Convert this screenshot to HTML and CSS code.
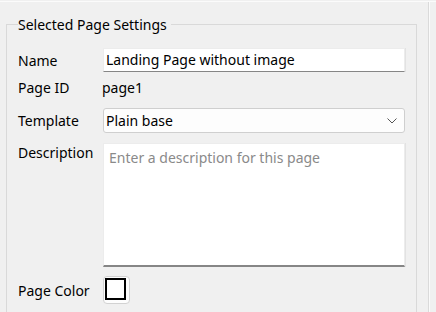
FILE: index.html
```html
<!DOCTYPE html>
<html>
<head>
<meta charset="utf-8">
<link rel="stylesheet" href="styles.css">
</head>
<body>
<div class="topline"></div>
<div class="frame">
  <div class="left">
    <fieldset class="group">
      <legend class="legend">Selected Page Settings</legend>
      <div class="row row-name">
        <label class="label">Name</label>
        <div class="input">Landing Page without image</div>
      </div>
      <div class="row row-id">
        <label class="label">Page ID</label>
        <div class="value">page1</div>
      </div>
      <div class="row row-template">
        <label class="label">Template</label>
        <div class="select">
          <span>Plain base</span>
          <svg class="chev" width="10" height="6" viewBox="0 0 10 6"><path d="M0.5 0.5 L5 5 L9.5 0.5" fill="none" stroke="#555" stroke-width="1"/></svg>
        </div>
      </div>
      <div class="row row-desc">
        <label class="label">Description</label>
        <div class="textarea"><span class="placeholder">Enter a description for this page</span></div>
      </div>
      <div class="row row-color">
        <label class="label">Page Color</label>
        <div class="colorbtn"><div class="swatch"></div></div>
      </div>
    </fieldset>
  </div>
  <div class="splitter"></div>
  <div class="right"></div>
</div>
</body>
</html>
```
FILE: styles.css
```css
html, body {
  margin: 0;
  padding: 0;
  background: #f0f0f0;
  font-family: "Noto Sans", "Open Sans", sans-serif;
  font-size: 14px;
  color: #000;
  overflow: hidden;
  height: 312px;
}
.topline {
  height: 1px;
  margin-top: 1px;
  background: #fbfbfb;
}
.frame {
  display: flex;
  height: 310px;
  overflow: hidden;
}
.left {
  width: 428px;
  padding: 0 11px 0 6px;
  box-sizing: border-box;
}
.group {
  margin: 13px 0 0 0;
  padding: 0 11px 0 11px;
  border: 1px solid #d9d9d9;
  border-bottom: none;
  height: 297px;
  box-sizing: border-box;
  min-width: 0;
}
.legend {
  padding: 0 4px 0 0;
  margin-left: 0;
  line-height: 19px;
}
.row {
  display: flex;
  align-items: center;
}
.label {
  width: 85px;
  flex: none;
  line-height: 19px;
}
.row-name { margin-top: 14px; }
.row-id { margin-top: 6px; height: 19px; }
.row-template { margin-top: 11px; }
.row-desc { margin-top: 10px; align-items: flex-start; }
.row-color { margin-top: 9px; }
.input {
  width: 302px;
  height: 24px;
  box-sizing: border-box;
  background: #fff;
  border: 1px solid #ececec;
  border-bottom: 1px solid #868686;
  padding: 0 0 0 2px;
  line-height: 22px;
  box-shadow: 1px 0 0 #e2e2e2;
}
.value {
  line-height: 19px;
  margin-left: -1px;
}
.select {
  width: 302px;
  height: 25px;
  box-sizing: border-box;
  background: #fdfdfd;
  border: 1px solid #cfcfcf;
  border-radius: 3px;
  padding: 0 7px 0 2px;
  display: flex;
  align-items: center;
  justify-content: space-between;
  line-height: 22px;
}
.chev { flex: none; }
.textarea {
  width: 302px;
  height: 124px;
  box-sizing: border-box;
  background: #fff;
  border: 1px solid #ececec;
  border-bottom: 2px solid #868686;
  padding: 4px 5px;
  line-height: 19px;
  box-shadow: 1px 0 0 #e2e2e2;
}
.placeholder { color: #8a8a8a; }
.colorbtn {
  width: 27px;
  height: 28px;
  box-sizing: border-box;
  border: 1px solid #d2d2d2;
  border-radius: 4px;
  background: #fdfdfd;
  padding: 1px;
}
.swatch {
  width: 21px;
  height: 22px;
  box-sizing: border-box;
  border: 2px solid #000;
  background: #fff;
}
.splitter {
  width: 2px;
  border-left: 1px solid #dadada;
  background: #fafafa;
  box-sizing: border-box;
}
.right {
  flex: 1;
  background: #f0f0f0;
}
```
